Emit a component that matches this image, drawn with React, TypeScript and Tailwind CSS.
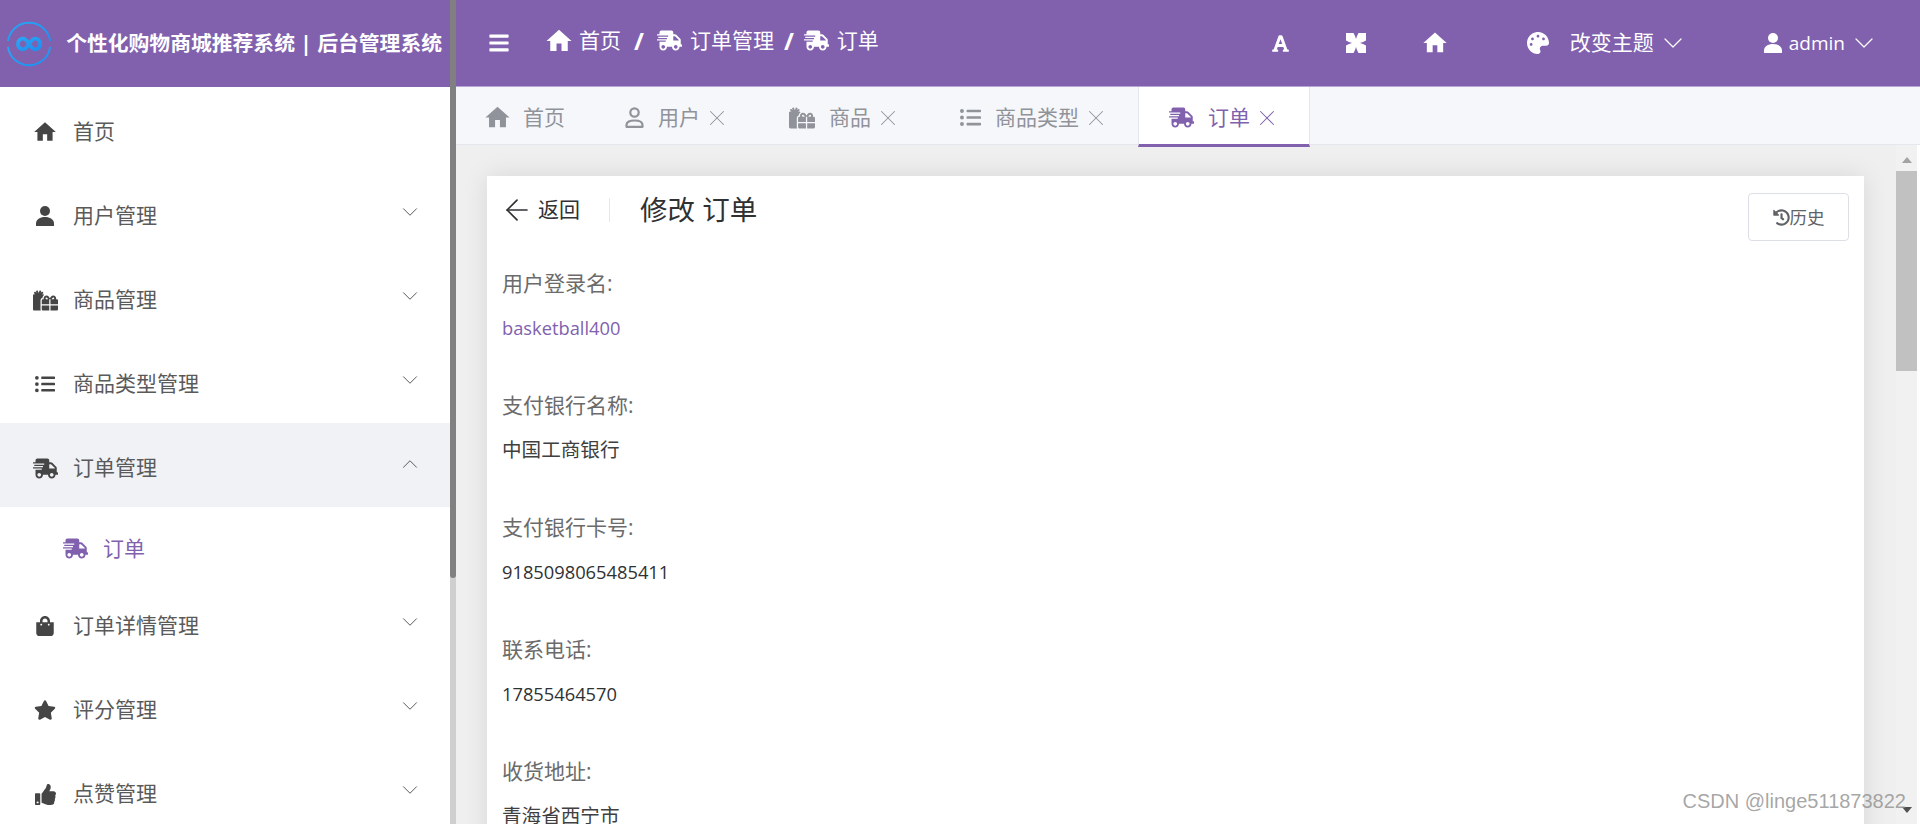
import { ArrowLeft, ChevronDown, ChevronUp, X } from "lucide-react";
import {
  FaBars,
  FaFont,
  FaGifts,
  FaHistory,
  FaListUl,
  FaPalette,
  FaShippingFast,
  FaShoppingBag,
  FaStar,
  FaThumbsUp,
} from "react-icons/fa";
import { MdHome } from "react-icons/md";

const Logo = () => (
  <svg width="56" height="56" viewBox="0 0 56 56" fill="none">
    <defs>
      <linearGradient id="logo" x1="0" y1="0" x2="1" y2="1">
        <stop offset="0" stopColor="#2aa5f5" />
        <stop offset="1" stopColor="#1e8ff0" />
      </linearGradient>
    </defs>
    <path d="M6.200 25A22 22 0 0 1 49.800 25" stroke="url(#logo)" strokeWidth="2" />
    <path d="M6.200 31A22 22 0 0 0 49.800 31" stroke="url(#logo)" strokeWidth="2" />
    <path
      d="M28 28c-2-3-3.500-5.500-6-5.500a5.500 5.500 0 0 0 0 11c2.500 0 4-2.500 6-5.500s3.500-5.500 6-5.500a5.500 5.500 0 0 1 0 11c-2.500 0-4-2.500-6-5.500z"
      stroke="url(#logo)"
      strokeWidth="4"
    />
  </svg>
);

const UserSolid = ({ w = 18 }: { w?: number }) => (
  <svg width={w} height={(w * 20) / 18} viewBox="0 0 18 20" fill="currentColor">
    <circle cx="9" cy="5" r="5" />
    <path d="M0 20v-2.500C0 13.500 4 11 9 11s9 2.500 9 6.500V20z" />
  </svg>
);

const UserOutline = () => (
  <svg width="19" height="21" viewBox="0 0 19 21" fill="none" stroke="currentColor" strokeWidth="2.200">
    <circle cx="9.500" cy="5.500" r="4.200" />
    <path d="M1.500 19.800v-1.800c0-3.200 3.500-4.500 8-4.500s8 1.300 8 4.500v1.800z" strokeLinejoin="round" />
  </svg>
);

const ExpandIcon = () => (
  <svg width="20" height="20" viewBox="0 0 20 20" fill="currentColor">
    <path d="M0 0H7.500L9 3L10 6L11 3L12.500 0H20V7.500L17 9L14 10L17 11L20 12.500V20H12.500L11 17L10 14L9 17L7.500 20H0V12.500L3 11L6 10L3 9L0 7.500Z" />
  </svg>
);

const menu = [
  { label: "首页", icon: <MdHome size={30} />, arrow: false },
  { label: "用户管理", icon: <UserSolid />, arrow: true },
  { label: "商品管理", icon: <FaGifts size={25} />, arrow: true },
  { label: "商品类型管理", icon: <FaListUl size={20} />, arrow: true },
];

const menuAfter = [
  { label: "订单详情管理", icon: <FaShoppingBag size={20} /> },
  { label: "评分管理", icon: <FaStar size={22} /> },
  { label: "点赞管理", icon: <FaThumbsUp size={21} /> },
];

const MenuRow = ({ label, icon, arrow, open, active }: { label: string; icon: React.ReactNode; arrow?: boolean; open?: boolean; active?: boolean }) => (
  <div className={`flex h-[84px] items-center pl-8 pr-[27px] pt-[6px] ${active ? "bg-[#f0f2f6]" : ""}`}>
    <span className="flex w-[26px] justify-center text-[#454545]">{icon}</span>
    <span className="ml-[15px] flex-1 text-[21px] text-[#5a5a5a]">{label}</span>
    {arrow &&
      (open ? (
        <ChevronUp size={26} strokeWidth={0.9} className="-mt-2 text-[#555]" />
      ) : (
        <ChevronDown size={26} strokeWidth={0.9} className="-mt-2 text-[#555]" />
      ))}
  </div>
);

const fields = [
  { label: "用户登录名:", value: "basketball400", link: true },
  { label: "支付银行名称:", value: "中国工商银行", cjk: true },
  { label: "支付银行卡号:", value: "9185098065485411" },
  { label: "联系电话:", value: "17855464570" },
  { label: "收货地址:", value: "青海省西宁市", cjk: true },
];

const Tab = ({ icon, label, close, active }: { icon: React.ReactNode; label: string; close?: boolean; active?: boolean }) => (
  <div
    className={`relative z-10 flex h-[60px] items-center pl-[30px] ${close ? "pr-[29px]" : "pr-[30px]"} ${
      active ? "border-b-[3px] border-x border-x-[#e4e7ed] border-b-[#8161ae] bg-white pt-[4px] text-[#8161ae]" : "pt-[1px] text-[#909399]"
    }`}
  >
    {icon}
    <span className="ml-[14px] text-[21px]">{label}</span>
    {close && <X size={26} strokeWidth={0.95} className="ml-[4px]" />}
  </div>
);

export default function App() {
  return (
    <div className="relative flex h-[824px] w-full overflow-hidden bg-white font-['Open_Sans','Noto_Sans_CJK_SC',sans-serif]">
      <aside className="flex w-[450px] shrink-0 flex-col overflow-hidden">
        <div className="flex h-[87px] shrink-0 items-center bg-[#8161ae] pl-[2px] pr-2 text-white">
          <Logo />
          <span className="ml-[10px] whitespace-nowrap text-[20.800px] font-bold">个性化购物商城推荐系统 | 后台管理系统</span>
        </div>
        <nav className="shrink-0">
          {menu.map((m) => (
            <MenuRow key={m.label} {...m} />
          ))}
          <MenuRow label="订单管理" icon={<FaShippingFast size={25} />} arrow open active />
          <div className="flex h-[74px] items-center pl-[62px] pt-[9px] text-[#8161ae]">
            <span className="flex w-[26px] justify-center">
              <FaShippingFast size={25} />
            </span>
            <span className="ml-[15px] text-[21px]">订单</span>
          </div>
          {menuAfter.map((m) => (
            <MenuRow key={m.label} {...m} arrow />
          ))}
        </nav>
      </aside>

      <div className="w-[6px] shrink-0 bg-[#cfcfcf]">
        <div className="h-[578px] rounded-b-[3px] bg-[#808080]" />
      </div>

      <main className="flex min-w-0 flex-1 flex-col">
        <header className="flex h-[87px] shrink-0 items-center border-b border-[#b7a5d6] bg-[#8161ae] text-white">
          <FaBars size={22} className="ml-[32px]" />
          <div className="-mt-[5px] ml-[34px] flex items-center text-[21px]">
            <MdHome size={30} />
            <span className="ml-[5px]">首页</span>
            <span className="mx-[13px] text-[24px] font-bold">/</span>
            <FaShippingFast size={25} />
            <span className="ml-[8px]">订单管理</span>
            <span className="mx-[10px] text-[24px] font-bold">/</span>
            <FaShippingFast size={25} />
            <span className="ml-[8px]">订单</span>
          </div>
          <div className="ml-auto flex items-center pr-[40px]">
            <FaFont size={19} />
            <span className="ml-[56px]">
              <ExpandIcon />
            </span>
            <MdHome size={28} className="ml-[55px]" />
            <FaPalette size={22} className="ml-[78px]" />
            <span className="ml-[21px] text-[21px]">改变主题</span>
            <ChevronDown size={32} strokeWidth={0.9} className="ml-[3px]" />
            <span className="ml-[75px]">
              <UserSolid />
            </span>
            <span className="ml-[7px] text-[19px]">admin</span>
            <ChevronDown size={32} strokeWidth={0.9} className="ml-[3px]" />
          </div>
        </header>

        <div className="flex h-[58px] shrink-0 items-start border-b border-[#e4e7ed] bg-[#f5f7fb]">
          <Tab icon={<MdHome size={29} className="-mx-[3px]" />} label="首页" />
          <Tab icon={<UserOutline />} label="用户" close />
          <Tab icon={<FaGifts size={26} />} label="商品" close />
          <Tab icon={<FaListUl size={21} />} label="商品类型" close />
          <Tab icon={<FaShippingFast size={25} />} label="订单" close active />
        </div>

        <div className="flex min-h-0 flex-1 bg-[#efefef]">
          <div className="min-w-0 flex-1 overflow-hidden pl-[31px] pr-[32px] pt-[31px]">
            <div className="h-[700px] bg-white px-[15px] shadow-[0_0_24px_rgba(0,0,0,0.1)]">
              <div className="flex h-[86px] items-start pt-[17px]">
                <div className="flex h-[34px] items-center">
                  <ArrowLeft size={34} strokeWidth={1.200} className="-ml-[2px] text-[#303133]" />
                  <span className="ml-[4px] text-[21px] text-[#303133]">返回</span>
                  <span className="ml-[29px] h-[24px] w-px bg-[#e4e7ed]" />
                  <span className="ml-[30px] text-[27.500px] text-[#303133]">修改 订单</span>
                </div>
                <button className="ml-auto flex h-[48px] w-[101px] items-center justify-center rounded-[4px] border border-[#dcdfe6] text-[17.500px] text-[#606266]">
                  <FaHistory size={17} />
                  历史
                </button>
              </div>
              {fields.map((f) => (
                <div key={f.label} className="mb-[34px]">
                  <div className="flex h-[44px] items-center text-[21px] text-[#6b6b6b]">{f.label}</div>
                  <div
                    className={`flex h-[44px] items-center ${f.cjk ? "text-[19.600px] text-[#404040]" : "text-[18.300px]"} ${
                      f.link ? "text-[#8161ae]" : "text-[#303133]"
                    }`}
                  >
                    {f.value}
                  </div>
                </div>
              ))}
            </div>
          </div>

          <div className="relative flex w-[21px] shrink-0 flex-col items-center bg-[#f1f1f1]">
            <span className="mt-[12px] h-0 w-0 border-x-[5px] border-b-[6px] border-x-transparent border-b-[#a3a3a3]" />
            <div className="mt-[8px] h-[200px] w-full bg-[#c1c1c1]" />
            <span className="absolute bottom-[11px] h-0 w-0 border-x-[5px] border-t-[6px] border-x-transparent border-t-[#505050]" />
          </div>
          <div className="w-[3px] shrink-0 bg-white" />
        </div>
      </main>

      <span className="absolute bottom-[8px] right-[14px] font-['Liberation_Sans',sans-serif] text-[20px] text-[#8f8f8f]/80">
        CSDN @linge511873822
      </span>
    </div>
  );
}
